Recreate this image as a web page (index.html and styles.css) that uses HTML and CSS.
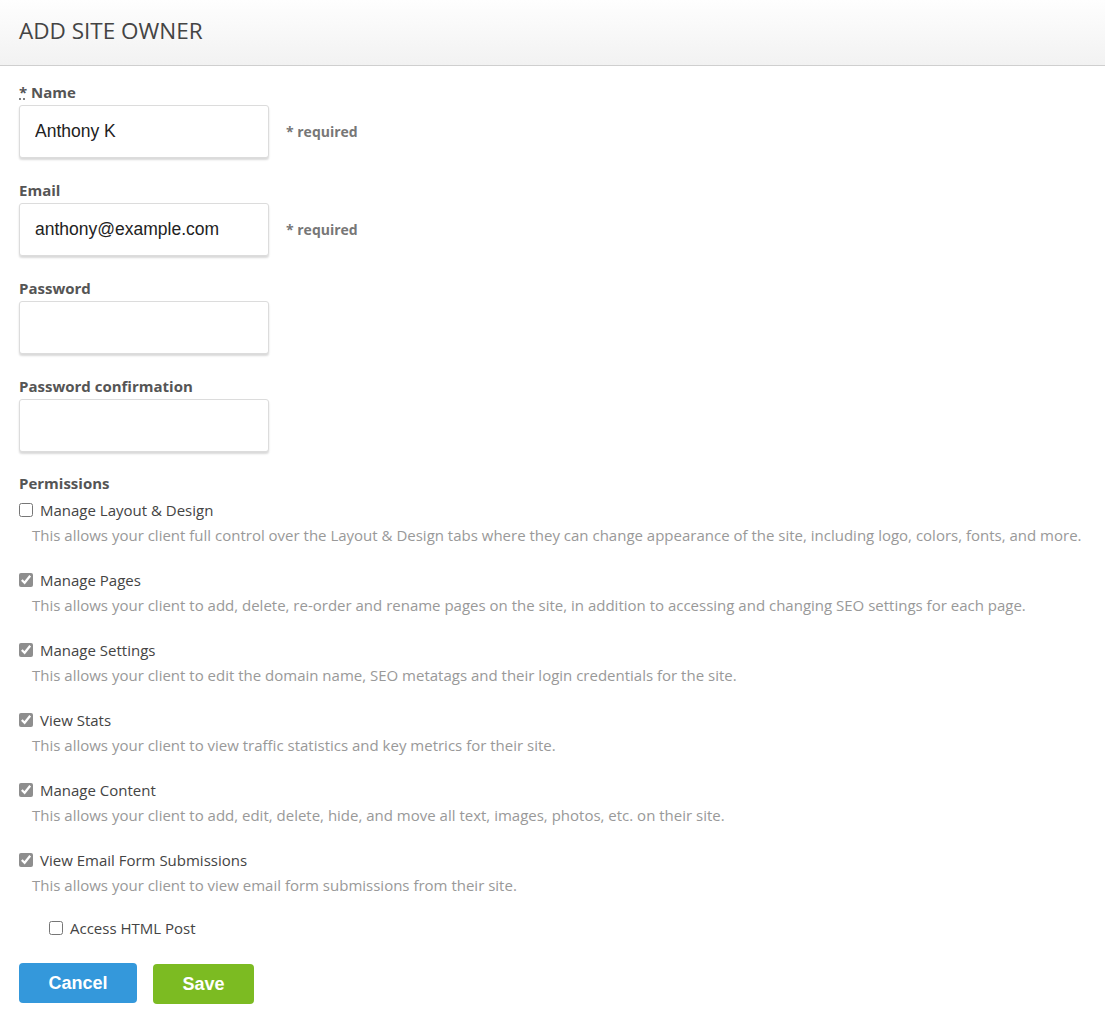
FILE: index.html
```html
<!DOCTYPE html>
<html lang="en">

<head>
  <meta charset="UTF-8">
  <title>Add Site Owner</title>
  <link rel="stylesheet" href="styles.css">
</head>

<body>
  <!-- Заголовок -->
  <div class="page-header">
    <h1>ADD SITE OWNER</h1>
  </div>

  <form class="owner-form">
    <div class="form-group">
      <label for="name"><abbr title="required">*</abbr> Name</label>
      <div class="field-row">
        <input type="text" id="name" value="Anthony K">
        <span class="hint">* required</span>
      </div>
    </div>

    <div class="form-group">
      <label for="email">Email</label>
      <div class="field-row">
        <input type="text" id="email" value="anthony@example.com">
        <span class="hint">* required</span>
      </div>
    </div>

    <div class="form-group">
      <label for="password">Password</label>
      <div class="field-row">
        <input type="password" id="password">
      </div>
    </div>

    <div class="form-group">
      <label for="password2">Password confirmation</label>
      <div class="field-row">
        <input type="password" id="password2">
      </div>
    </div>

    <!-- Права доступа -->
    <div class="permissions">
      <div class="perm-title">Permissions</div>

      <div class="perm">
        <label class="check"><input type="checkbox"> Manage Layout &amp; Design</label>
        <p>This allows your client full control over the Layout &amp; Design tabs where they can change appearance of the site, including logo, colors, fonts, and more.</p>
      </div>

      <div class="perm">
        <label class="check"><input type="checkbox" checked> Manage Pages</label>
        <p>This allows your client to add, delete, re-order and rename pages on the site, in addition to accessing and changing SEO settings for each page.</p>
      </div>

      <div class="perm">
        <label class="check"><input type="checkbox" checked> Manage Settings</label>
        <p>This allows your client to edit the domain name, SEO metatags and their login credentials for the site.</p>
      </div>

      <div class="perm">
        <label class="check"><input type="checkbox" checked> View Stats</label>
        <p>This allows your client to view traffic statistics and key metrics for their site.</p>
      </div>

      <div class="perm">
        <label class="check"><input type="checkbox" checked> Manage Content</label>
        <p>This allows your client to add, edit, delete, hide, and move all text, images, photos, etc. on their site.</p>
      </div>

      <div class="perm">
        <label class="check"><input type="checkbox" checked> View Email Form Submissions</label>
        <p>This allows your client to view email form submissions from their site.</p>
      </div>

      <div class="perm sub">
        <label class="check"><input type="checkbox"> Access HTML Post</label>
      </div>
    </div>

    <div class="actions">
      <button type="button" class="btn btn-cancel">Cancel</button>
      <button type="submit" class="btn btn-save">Save</button>
    </div>
  </form>
</body>

</html>
```

FILE: styles.css
```css
/* Общие стили */
body {
  margin: 0;
  font-family: 'Open Sans', sans-serif;
  background-color: #fff;
  color: #444;
}

/* Хедер */
.page-header {
  box-sizing: border-box;
  height: 66px;
  border-bottom: 1px solid #cfcfcf;
  background: linear-gradient(to bottom, #fefefe 0%, #f2f2f2 100%);
  padding: 0 19px 4px;
  display: flex;
  align-items: center;
}

.page-header h1 {
  margin: 0;
  font-size: 22.5px;
  font-weight: normal;
  color: #444;
}

/* Форма */
.owner-form {
  padding: 16px 19px 20px;
}

.form-group {
  margin-bottom: 22px;
}

.form-group label {
  display: block;
  font-size: 15px;
  font-weight: bold;
  color: #555;
  line-height: 20px;
  margin-bottom: 3px;
}

.form-group abbr {
  text-decoration: underline dotted;
  border: none;
}

.field-row {
  display: flex;
  align-items: center;
}

.field-row input {
  box-sizing: border-box;
  width: 250px;
  height: 53px;
  padding: 0 15px;
  border: 1px solid #dcdcdc;
  border-radius: 3px;
  box-shadow: 0 2px 2px rgba(0, 0, 0, 0.15);
  font-family: 'Liberation Sans', Arial, sans-serif;
  font-size: 17.5px;
  color: #222;
  background: #fff;
}

.hint {
  margin-left: 17px;
  font-size: 14px;
  font-weight: bold;
  color: #777;
}

/* Права доступа */
.permissions {
  margin-top: -1px;
}

.perm-title {
  font-size: 15px;
  font-weight: bold;
  color: #555;
  line-height: 20px;
  margin-bottom: 6px;
}

.perm {
  margin-bottom: 22px;
}

.check {
  display: flex;
  align-items: center;
  font-size: 15px;
  line-height: 22px;
  color: #444;
}

.check input {
  width: 14px;
  height: 14px;
  margin: 0 7px 0 0;
  accent-color: #8e8e8e;
}

.perm p {
  margin: 3px 0 0 13px;
  font-size: 15px;
  line-height: 23px;
  color: #999;
}

.perm.sub {
  margin: -2px 0 24px 30px;
}

/* Кнопки */
.actions {
  display: flex;
  align-items: flex-start;
  gap: 16px;
}

.btn {
  height: 40px;
  border: none;
  border-radius: 4px;
  font-family: 'Liberation Sans', Arial, sans-serif;
  font-size: 18px;
  font-weight: bold;
  color: #fff;
  cursor: pointer;
}

.btn-cancel {
  width: 118px;
  background-color: #3498db;
}

.btn-save {
  width: 101px;
  margin-top: 1px;
  background-color: #7cbb22;
}
```
